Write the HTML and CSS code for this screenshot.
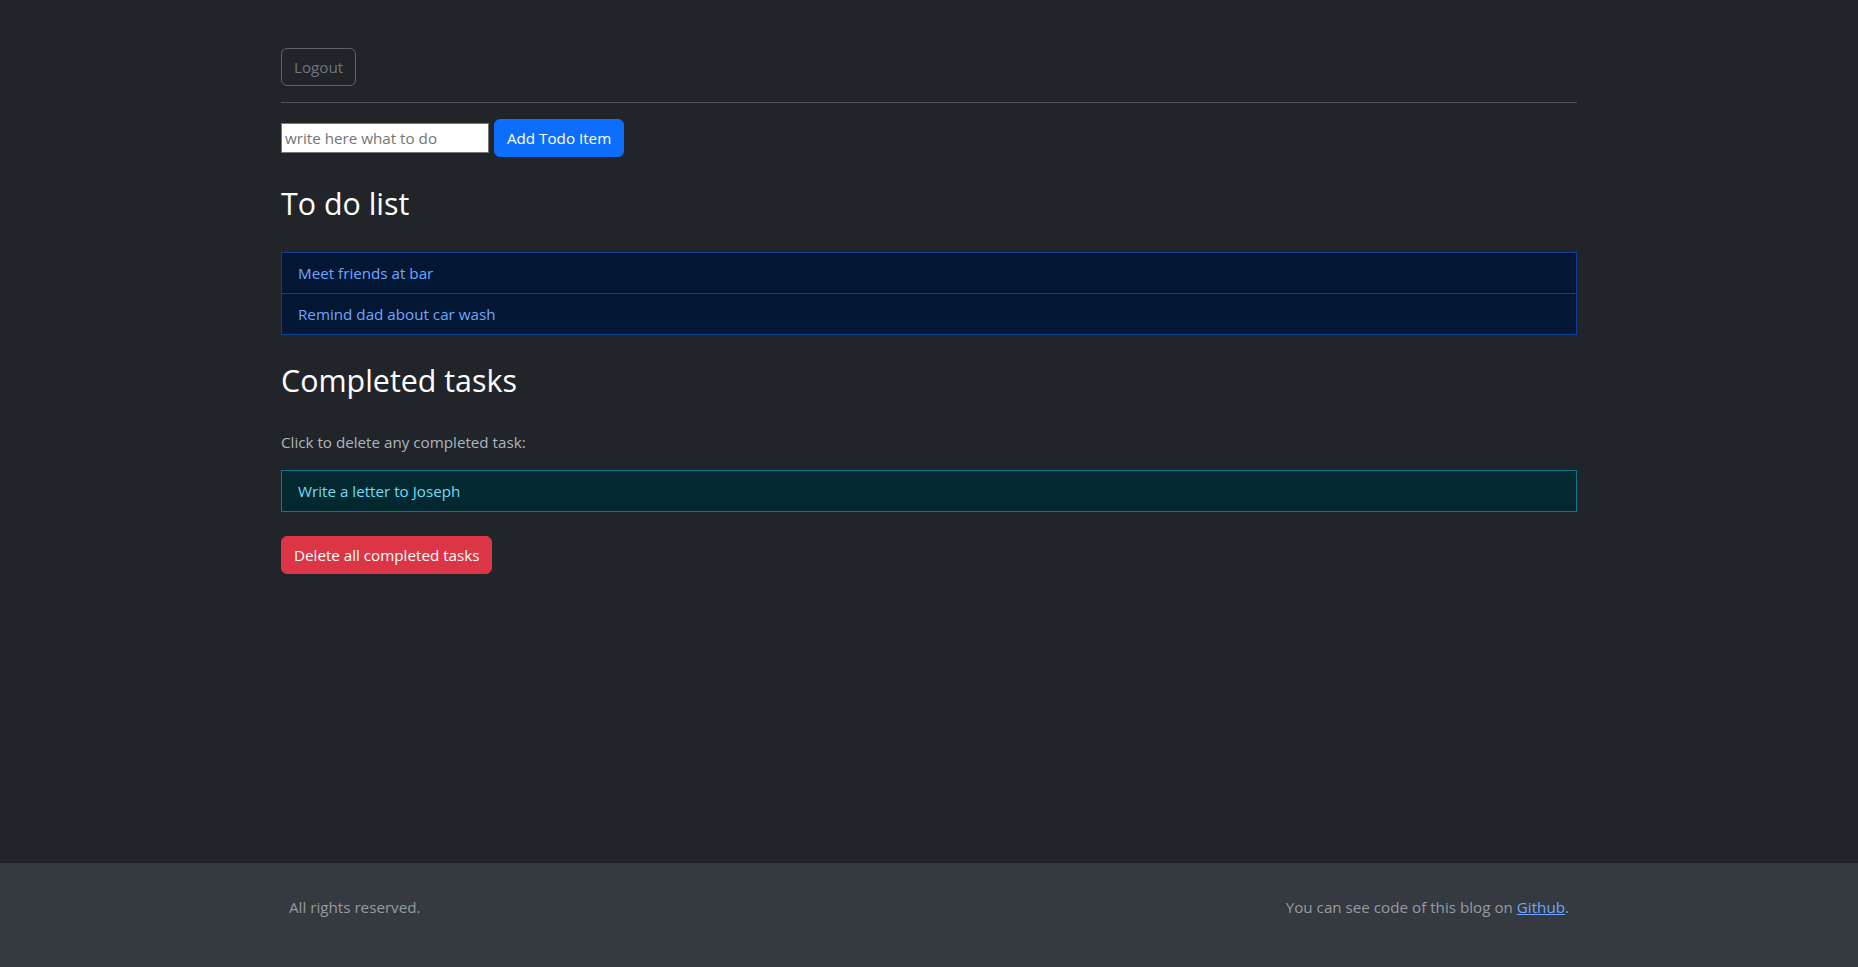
FILE: index.html
```html
<!DOCTYPE html>
<html lang="en">
<head>
<meta charset="utf-8">
<title>Todo</title>
<link rel="stylesheet" href="styles.css">
</head>
<body>
<main class="main">
  <div class="container">
    <button class="btn btn-logout">Logout</button>
    <hr class="divider">
    <form class="add-form">
      <input class="todo-input" type="text" placeholder="write here what to do">
      <button type="button" class="btn btn-primary">Add Todo Item</button>
    </form>
    <h2 class="heading">To do list</h2>
    <ul class="list list-primary">
      <li class="list-item">Meet friends at bar</li>
      <li class="list-item">Remind dad about car wash</li>
    </ul>
    <h2 class="heading">Completed tasks</h2>
    <p class="hint">Click to delete any completed task:</p>
    <ul class="list list-info">
      <li class="list-item">Write a letter to Joseph</li>
    </ul>
    <button class="btn btn-danger">Delete all completed tasks</button>
  </div>
</main>
<footer class="footer">
  <div class="container footer-inner">
    <p class="footer-text">All rights reserved.</p>
    <p class="footer-text">You can see code of this blog on <a class="footer-link" href="#">Github</a>.</p>
  </div>
</footer>
</body>
</html>
```
FILE: styles.css
```css
* { box-sizing: border-box; }
html, body { height: 100%; }
body {
  margin: 0;
  background: #212529;
  color: #dee2e6;
  font-family: "Open Sans", "Noto Sans", sans-serif;
  font-size: 15.2px;
  line-height: 24px;
  display: flex;
  flex-direction: column;
  min-height: 100vh;
}
.main { flex: 1; }
.container {
  width: 1320px;
  margin: 0 auto;
  padding: 0 12px;
}
.main .container { padding-top: 48px; }
.btn {
  display: inline-block;
  font: inherit;
  line-height: 24px;
  padding: 6px 12px;
  border: 1px solid transparent;
  border-radius: 6px;
  cursor: pointer;
}
.btn-logout {
  background: transparent;
  border-color: #5c636a;
  color: #6c757d;
}
.divider {
  margin: 16px 0;
  border: 0;
  border-top: 1px solid rgba(222,226,230,0.25);
}
.add-form { margin: 0 0 28px; }
.todo-input {
  font: inherit;
  line-height: 24px;
  width: 208px;
  height: 30px;
  padding: 1px 3px;
  border: 1px solid #767676;
  background: #fff;
  color: #000;
  vertical-align: baseline;
}
.todo-input::placeholder { color: #757575; }
.btn-primary {
  background: #0d6efd;
  border-color: #0d6efd;
  color: #fff;
  margin-left: 1px;
}
.heading {
  margin: 0 0 29px;
  font-size: 30.4px;
  font-weight: 400;
  line-height: 38.4px;
  color: #fff;
}
.list {
  list-style: none;
  margin: 0 0 24px;
  padding: 0;
  display: flex;
  flex-direction: column;
}
.list-primary { margin-bottom: 27px; }
.list-item {
  padding: 8px 16px;
  border: 1px solid;
}
.list-item + .list-item { border-top-width: 0; }
.list-primary .list-item {
  background: #031633;
  border-color: #084298;
  color: #6ea8fe;
}
.list-info .list-item {
  background: #032830;
  border-color: #087990;
  color: #6edff6;
}
.hint {
  margin: 0 0 16px;
  color: #adb5bd;
}
.btn-danger {
  background: #dc3545;
  border-color: #dc3545;
  color: #fff;
}
.footer {
  background: #343a40;
  padding: 32px 0;
}
.footer-inner {
  display: flex;
  justify-content: space-between;
}
.footer-text {
  margin: 0 0 16px;
  padding: 0 8px;
  color: #959ba1;
}
.footer-link { color: #6ea8fe; text-decoration: underline; }
```
